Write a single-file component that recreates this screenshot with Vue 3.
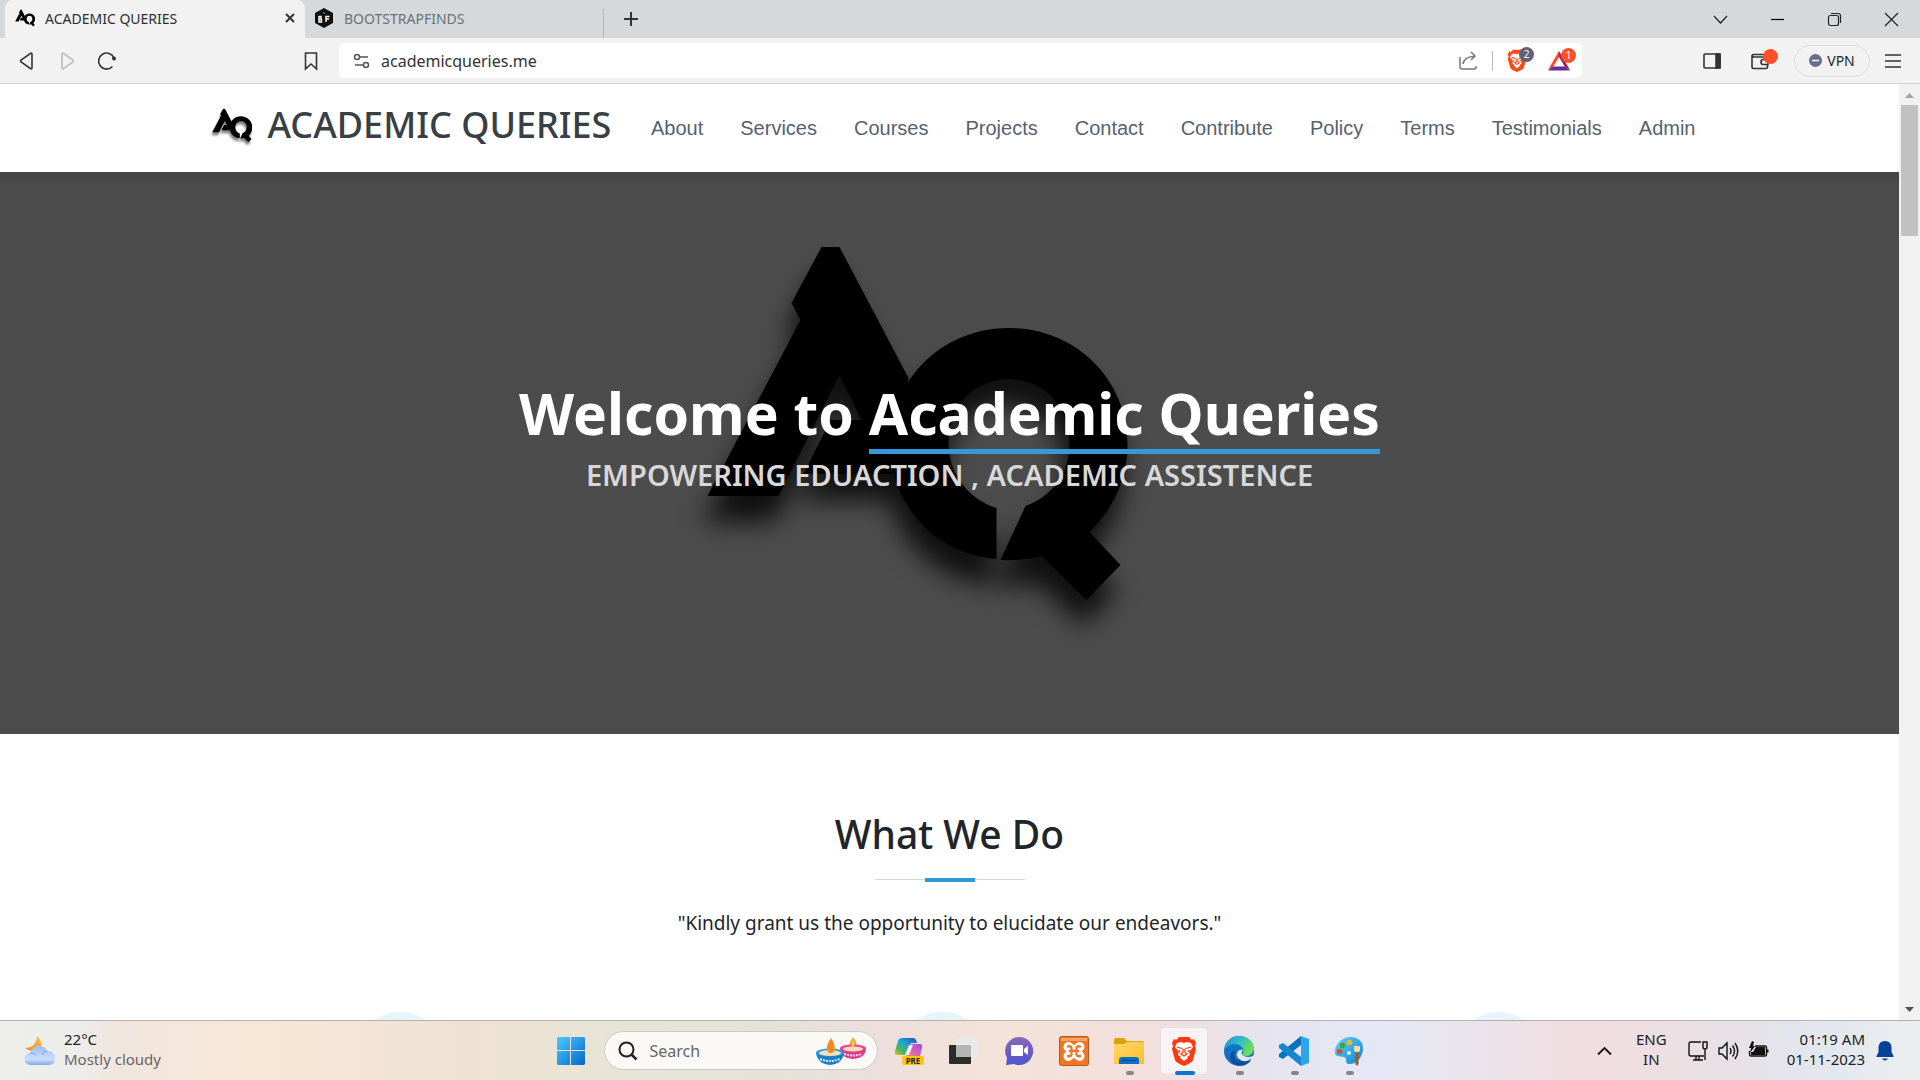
<script setup>
const navLinks = ['About', 'Services', 'Courses', 'Projects', 'Contact', 'Contribute', 'Policy', 'Terms', 'Testimonials', 'Admin']
const logoA = 'M821 247H839L908 378L900 474H803L830 420H861L839 375L778 496H707L800 320L791 303Z'
const logoQ = 'M1041 556Q1022 561 1000 560L1025 506C1052 496 1069 474 1069 443C1069 405 1042 379 1008.500 379C975 379 948 405 948 443C948 474 968 499 996 508V559C935 554 890 506 890 444C890 379 942 328 1008.500 328C1075 328 1127 379 1127 444C1127 478 1113 509 1089 532L1120 565L1086 600Z'
const lion = 'M8 1h10l3 3 2-1 2 4-1 3 1 3-3 11q0 2-9 6-9-4-9-6L1 13l1-3-1-3 2-4 2 1z'
const lionFace = 'M6 7l4-1 3 1 3-1 4 1 2 4-4 5 1 3-3 2 1 1-4 3-4-3 1-1-3-2 1-3-4-5z'
const lionLines = 'M6 11l5 1.500M20 11l-5 1.500M12 12.500v4l-2 1.500 3 2 3-2-2-1.500v-4M8 14l1 2M18 14l-1 2'
</script>

<template>
  <div class="screen">
    <header class="browser">
      <div class="tabs">
        <div class="tab active">
          <svg class="favicon" viewBox="704 244 420 360"><path :d="logoA" /><path :d="logoQ" /></svg>
          <span class="tab-title">ACADEMIC QUERIES</span>
          <button class="plain" aria-label="Close tab">
            <svg width="12" height="12" viewBox="0 0 12 12"><path d="M2 2l8 8M10 2l-8 8" stroke="#333" stroke-width="2" /></svg>
          </button>
        </div>
        <div class="tab idle">
          <svg class="favicon" viewBox="0 0 20 20"><path d="M10 0l9 5v10l-9 5-9-5V5z" fill="#111" /><path d="M5 8v6h2.500v-2.500H5M5 8.500h2v3M12 14V8.500h3.500M12 11h3" fill="none" stroke="#fff" stroke-width="1.400" /><path d="M9 4l2 2" stroke="#999" /></svg>
          <span class="tab-title">BOOTSTRAPFINDS</span>
        </div>
        <button class="plain new-tab" aria-label="New tab">
          <svg width="16" height="16" viewBox="0 0 16 16"><path d="M8 1v14M1 8h14" stroke="#333" stroke-width="2" /></svg>
        </button>
        <div class="window-buttons">
          <button class="plain" aria-label="Search tabs"><svg width="15" height="15" viewBox="0 0 15 15"><path d="M1 4l6.500 7L14 4" /></svg></button>
          <button class="plain" aria-label="Minimize"><svg width="15" height="15" viewBox="0 0 15 15"><path d="M1 7.500h13" stroke="#000" /></svg></button>
          <button class="plain" aria-label="Restore"><svg width="15" height="15" viewBox="0 0 15 15"><rect x="1.500" y="3.500" width="10" height="10" rx="2" /><path d="M4 1.500h7q2.500 0 2.500 2.500v7" /></svg></button>
          <button class="plain" aria-label="Close window"><svg width="15" height="15" viewBox="0 0 15 15"><path d="M1 1l13 13M14 1L1 14" /></svg></button>
        </div>
      </div>

      <div class="toolbar">
        <div class="history">
          <button class="plain" aria-label="Back"><svg width="20" height="20" viewBox="0 0 20 20"><path d="M15 3q0-1-1-1L4 9q-1 1 0 2l10 7q1 0 1-1z" /></svg></button>
          <button class="plain" aria-label="Forward"><svg class="dim" width="20" height="20" viewBox="0 0 20 20"><path d="M5 3q0-1 1-1l10 7q1 1 0 2L6 18q-1 0-1-1z" /></svg></button>
          <button class="plain" aria-label="Reload"><svg width="20" height="20" viewBox="0 0 20 20"><path d="M15.500 15.500A8 8 0 1 1 17 7" /><circle cx="17" cy="7.500" r="2" fill="#333" stroke="none" /></svg></button>
        </div>
        <button class="plain bookmark" aria-label="Bookmark"><svg width="20" height="20" viewBox="0 0 20 20"><path d="M4.500 2h11v16L10 13l-5.500 5z" /></svg></button>
        <div class="address">
          <svg class="site-info" width="18" height="18" viewBox="0 0 18 18"><circle cx="4" cy="5" r="2.500" /><path d="M6.500 5H15M2 13h8" /><circle cx="13" cy="13" r="2.500" /></svg>
          <input class="url" type="text" value="academicqueries.me" aria-label="Address" />
          <button class="plain" aria-label="Share"><svg class="share" width="20" height="20" viewBox="0 0 20 20"><path d="M2 6v10q0 2 2 2h12q2 0 2-2v-1M5 13q1-7 12-8M13 1l4 4-4 4" /></svg></button>
          <span class="rule"></span>
          <button class="plain shield" aria-label="Shields">
            <svg width="20" height="23" viewBox="0 0 26 30"><path :d="lion" fill="#fb4b16" /><path :d="lionFace" fill="#fff" /><path :d="lionLines" fill="none" stroke="#fb4b16" stroke-width="1.400" /></svg>
            <span class="badge">2</span>
          </button>
          <button class="plain rewards" aria-label="Rewards">
            <svg width="24" height="22" viewBox="0 0 24 22"><path d="M12 1L1 20l5-3 6-10z" fill="#ff4724" /><path d="M12 1l11 19-5-3-6-10z" fill="#9e1f63" /><path d="M1 20.500h22l-5-4H6z" fill="#662d91" /></svg>
            <span class="badge hot">1</span>
          </button>
        </div>
        <div class="tools">
          <button class="plain" aria-label="Sidebar"><svg width="18" height="18" viewBox="0 0 18 18"><rect x="1" y="2" width="16" height="14" rx="1" /><path d="M13 2h4v14h-4z" fill="#333" /></svg></button>
          <button class="plain wallet" aria-label="Wallet"><svg width="18" height="18" viewBox="0 0 18 18"><path d="M16.500 7V5H3Q1 4.500 1 3.500Q1.500 2.500 3 2.500H15M1 3.500V15q0 1.500 1.500 1.500H15q1.500 0 1.500-1.500v-2" /><path d="M17 7.500h-5q-2 0-2 2.500t2 2.500h5z" /></svg><span class="badge hot dot"></span></button>
          <button class="vpn"><svg width="13" height="13" viewBox="0 0 13 13"><circle cx="6.500" cy="6.500" r="6.500" fill="#676d91" /><path d="M3 6.500h7" stroke="#fff" stroke-width="1.500" /></svg>VPN</button>
          <button class="plain" aria-label="Menu"><svg width="18" height="16" viewBox="0 0 18 16"><path d="M1 2h16M1 8h16M1 14h16" /></svg></button>
        </div>
      </div>
    </header>

    <div class="viewport">
      <div class="page">
        <header class="site-header">
          <div class="container">
            <a class="brand" href="#">
              <svg class="brand-logo" viewBox="704 244 420 360"><path :d="logoA" /><path :d="logoQ" /></svg>
              <span>ACADEMIC QUERIES</span>
            </a>
            <nav class="site-nav">
              <a v-for="link in navLinks" :key="link" href="#">{{ link }}</a>
            </nav>
          </div>
        </header>

        <section class="hero">
          <svg class="hero-art" viewBox="649 172 600 562" aria-hidden="true">
            <g class="hero-mark"><path :d="logoA" /><path :d="logoQ" /></g>
          </svg>
          <h1>Welcome to <span>Academic Queries</span></h1>
          <h2>EMPOWERING EDUACTION , ACADEMIC ASSISTENCE</h2>
        </section>

        <section class="services">
          <h2>What We Do</h2>
          <div class="divider"></div>
          <p>"Kindly grant us the opportunity to elucidate our endeavors."</p>
          <div class="cards"><i></i><i></i><i></i></div>
        </section>
      </div>
      <div class="scrollbar" aria-hidden="true">
        <svg width="21" height="21" viewBox="0 0 21 21"><path d="M6 14h9l-4.500-5z" fill="#a3a3a3" /></svg>
        <div class="track"><div class="thumb"></div></div>
        <svg width="21" height="21" viewBox="0 0 21 21"><path d="M6 8h9l-4.500 5z" fill="#505050" /></svg>
      </div>
    </div>

    <footer class="taskbar">
      <div class="weather">
        <svg width="32" height="32" viewBox="0 0 32 32">
          <defs>
            <linearGradient id="moon" x1="0" y1="1" x2="1" y2="0"><stop offset="0" stop-color="#f08a1d" /><stop offset="1" stop-color="#f7c548" /></linearGradient>
            <linearGradient id="cloud" x1="0" y1="0" x2="0" y2="1"><stop offset="0" stop-color="#9dbdf5" /><stop offset=".7" stop-color="#cfdffb" /><stop offset="1" stop-color="#7ea4ec" /></linearGradient>
          </defs>
          <path d="M13 1q7 7 3 12-8 6-15 0Q12 13 13 1z" fill="url(#moon)" />
          <path d="M7 30a6 6 0 0 1-1-12Q9 11 15 11q6 0 8 5 8 0 8 7t-7 7z" fill="url(#cloud)" />
          <path d="M6 18q4 0 6 2M23 16q-4 0-5 4" fill="none" stroke="#7fa3e6" />
        </svg>
        <div class="lines"><div>22°C</div><div class="muted">Mostly cloudy</div></div>
      </div>

      <div class="apps">
        <button class="app" aria-label="Start">
          <svg width="30" height="30" viewBox="0 0 30 30"><defs><linearGradient id="win" x1="0" y1="0" x2="1" y2="1"><stop offset="0" stop-color="#4cc9fb" /><stop offset="1" stop-color="#0568d0" /></linearGradient></defs><path d="M2 1h12v13H1V2zM15 1h13l1 1v12H15zM1 15h13v14H2l-1-1zM15 15h14v13l-1 1H15z" fill="url(#win)" /></svg>
        </button>
        <div class="search">
          <svg width="20" height="20" viewBox="0 0 20 20"><circle cx="8.500" cy="8.500" r="7" fill="none" stroke="#222" stroke-width="2" /><path d="M13.500 13.500l5 5" stroke="#222" stroke-width="2.500" /></svg>
          <input type="text" placeholder="Search" aria-label="Search" />
          <svg width="52" height="28" viewBox="0 0 52 28">
            <path d="M38 0q6 8 2 11h-4q-4-3 2-11z" fill="#f6a23c" />
            <path d="M25 11h26q0 10-13 11-13-1-13-11z" fill="#d93b89" /><ellipse cx="38" cy="11" rx="13" ry="3.500" fill="#e9498f" /><ellipse cx="38" cy="12" rx="10" ry="2.500" fill="#f8d9b9" /><path d="M38 2q3 6 0 9-3-3 0-9z" fill="#fbc65a" />
            <path d="M29 17q9 3 18 0" fill="none" stroke="#ffd7ea" stroke-width="2" stroke-dasharray="2 1" />
            <path d="M1 15h28q-1 12-14 13Q2 27 1 15z" fill="#1c7fc4" /><ellipse cx="15" cy="15.500" rx="14" ry="4" fill="#2b9ad9" /><ellipse cx="15" cy="16" rx="11" ry="3" fill="#f6e2ba" />
            <path d="M16 1q7 11 1 15h-3q-5-5 2-15z" fill="#f48a1f" />
            <path d="M5 22q10 4 20 0" fill="none" stroke="#cfeaff" stroke-width="2" stroke-dasharray="2 1" />
          </svg>
        </div>
        <button class="app" aria-label="Copilot">
          <svg width="30" height="30" viewBox="0 0 30 30">
            <defs>
              <linearGradient id="cpa" x1="1" y1="0" x2="0" y2="1"><stop offset="0" stop-color="#1b4fc4" /><stop offset=".45" stop-color="#20a5d8" /><stop offset=".75" stop-color="#4fb84f" /><stop offset="1" stop-color="#f2c230" /></linearGradient>
              <linearGradient id="cpb" x1="1" y1="0" x2="0" y2="1"><stop offset="0" stop-color="#9a52e8" /><stop offset=".5" stop-color="#d65cc0" /><stop offset="1" stop-color="#f98a52" /></linearGradient>
            </defs>
            <path d="M8 2h11q3 0 4 5h-6l-4 12H3q-3 0-2-4L4 5q1-3 4-3z" fill="url(#cpa)" />
            <path d="M18 8h8q3 0 2 4l-2 8H12l4-10q0-2 2-2z" fill="url(#cpb)" />
            <path d="M15 9h4l-4 10h-4z" fill="#f5eef2" />
            <rect x="8" y="20" width="22" height="9" rx="2" fill="#fdc70d" />
            <text x="19" y="28" class="pre">PRE</text>
          </svg>
        </button>
        <button class="app" aria-label="Task view">
          <svg width="30" height="30" viewBox="0 0 30 30"><rect x="0" y="9" width="22" height="19" rx="1" fill="#2c2c2b" /><rect x="7" y="1" width="22" height="20" rx="1" fill="#e9e9e8" fill-opacity=".92" /><path d="M7 9h15v12H7z" fill="#b5b5b3" /></svg>
        </button>
        <button class="app" aria-label="Chat">
          <svg width="30" height="30" viewBox="0 0 30 30"><defs><linearGradient id="chat" x1="0" y1="0" x2="0" y2="1"><stop offset="0" stop-color="#8a66b8" /><stop offset="1" stop-color="#4f55cf" /></linearGradient></defs><path d="M15 1a14 14 0 1 1-5 27l-8 1 1-7A14 14 0 0 1 15 1z" fill="url(#chat)" /><rect x="7" y="9" width="12" height="11" rx="1" fill="#fff" /><path d="M20 13l4-3v9l-4-3z" fill="#fff" /></svg>
        </button>
        <button class="app" aria-label="XAMPP">
          <svg width="30" height="30" viewBox="0 0 30 30"><rect x=".5" y=".5" width="29" height="29" rx="2" fill="#ef7622" stroke="#b3571a" /><path d="M2 2h26v3H2z" fill="#f7a468" /><path d="M9.500 11L20.500 20M20.500 11L9.500 20" stroke="#fff" stroke-width="10" stroke-linecap="round" /><path d="M9 10.500q4-1 3.500 2.500M9 20q4 1 3.500-2.500M21 10.500q-4-1-3.500 2.500M21 20q-4 1-3.500-2.500M11 15h8" fill="none" stroke="#ef7622" stroke-width="2.400" stroke-linecap="round" /></svg>
        </button>
        <button class="app" aria-label="File Explorer">
          <svg width="30" height="30" viewBox="0 0 30 30"><defs><linearGradient id="folder" x1="0" y1="0" x2="1" y2="1"><stop offset="0" stop-color="#ffd968" /><stop offset="1" stop-color="#fbbd2b" /></linearGradient></defs><path d="M0 4q0-2 2-2h8l3 3h15q2 0 2 2v5H0z" fill="#dda00f" /><path d="M0 8h10l3-2h15q2 0 2 2v20H0z" fill="url(#folder)" /><path d="M5 28v-4q0-3 3-3h14q3 0 3 3v4z" fill="#0c6fc2" /><path d="M8 24.500h14" stroke="#0a4a8a" /></svg>
          <span class="running"></span>
        </button>
        <button class="app" aria-label="Brave">
          <span class="tile"><svg width="26" height="30" viewBox="0 0 26 30"><path :d="lion" fill="#fb3a12" /><path :d="lionFace" fill="#fff" /><path :d="lionLines" stroke="#fb3a12" stroke-width="1.300" fill="none" /></svg></span>
          <span class="running wide"></span>
        </button>
        <button class="app" aria-label="Edge">
          <svg width="30" height="30" viewBox="0 0 30 30">
            <defs><linearGradient id="edge" x1="0" y1="0" x2="1" y2=".5"><stop offset="0" stop-color="#1a8bd0" /><stop offset=".5" stop-color="#30bccb" /><stop offset="1" stop-color="#6fe052" /></linearGradient></defs>
            <circle cx="15" cy="15" r="15" fill="#1273c4" />
            <path d="M0 14C1 5 8 0 15 0c9 0 15 6 15 12 0 5-4 8-8 8-3 0-4-1-4-2 1-1 2-2 1-5C17 7 5 6 0 14z" fill="url(#edge)" />
            <path d="M11 14c-3 8 3 14 10 13l6-3C24 30 12 33 7 25q-3-7 4-11z" fill="#0d4f9c" />
            <path d="M29 20c1 1-1 4-3 5-8 3-15-3-13-8 1-3 4-4 6-3-2 2-2 5 1 6q4 2 9 0z" fill="#e4e6f2" />
            <path d="M27 22c-3 5-11 4-14-1 1 6 7 8 12 5q2-2 2-4z" fill="#0d4f9c" />
          </svg>
          <span class="running"></span>
        </button>
        <button class="app" aria-label="Visual Studio Code">
          <svg width="30" height="30" viewBox="0 0 30 30"><path d="M22 0l8 3v24l-8 3z" fill="#2ba5ee" /><path d="M22 0v9L4 23l-4-2v-3z" fill="#0b72b8" /><path d="M22 30v-9L4 7 0 9v3z" fill="#1587d0" /></svg>
          <span class="running"></span>
        </button>
        <button class="app" aria-label="Paint">
          <svg width="30" height="30" viewBox="0 0 30 30"><defs><linearGradient id="paint" x1="0" y1="0" x2="1" y2="1"><stop offset="0" stop-color="#5ed2f7" /><stop offset="1" stop-color="#1283cf" /></linearGradient></defs><path d="M16 1c8 0 13 4 13 11 0 8-5 16-14 16-5 0-1-6-5-7-5-1-9 0-9-5C1 8 8 1 16 1z" fill="url(#paint)" /><circle cx="15.500" cy="6.500" r="2.800" fill="#f6b51e" /><circle cx="8.500" cy="9.500" r="2.800" fill="#3da33c" /><circle cx="5.500" cy="15.500" r="2.800" fill="#d1552b" /><circle cx="15" cy="17" r="2" fill="#e6f5fd" /><path d="M20 10h6v4l-1 2h-4l-1-2z" fill="#f3dcae" /><path d="M21.500 16h3v12q-1.500 3-3 0z" fill="#9a5a2a" /></svg>
          <span class="running"></span>
        </button>
      </div>

      <div class="tray">
        <svg width="15" height="10" viewBox="0 0 15 10"><path d="M1 8.500l6.500-6.500L14 8.500" stroke-width="1.800" /></svg>
        <div class="lang lines">ENG<br />IN</div>
        <div class="status">
          <svg width="22" height="22" viewBox="0 0 22 22"><path d="M14 2H4Q2 2 2 4v10q0 2 2 2h13M6 20h10M9 16v4M12 16v4M16 2h4v5q0 2-2 2t-2-2zM18 9v11" /></svg>
          <svg width="22" height="22" viewBox="0 0 22 22"><path d="M2 8h3l5-5v16l-5-5H2zM13 8q2 3 0 6M15.500 5.500q4 5.500 0 11M18 3q5.500 8 0 16" /></svg>
          <svg width="22" height="22" viewBox="0 0 22 22"><path d="M8 6h10q1.500 0 1.500 1.500v7Q19.500 16 18 16H4q-1.500 0-1.500-1.500V11" /><path d="M9 7h9v8H4v-3h2z" fill="#111" stroke="none" /><path d="M20.500 9.500v3" stroke-width="2" /><path d="M5 1L2 8h2l-1 5 5-7H6l1-4z" fill="#111" stroke="none" /></svg>
        </div>
        <div class="clock lines">01:19 AM<br />01-11-2023</div>
        <svg width="18" height="20" viewBox="0 0 18 20"><path d="M9 0q6 0 6.500 6v5l2 4v1H.5v-1l2-4V6Q3 0 9 0z" fill="#06419a" stroke="none" /><path d="M6 17.500h6q-1 2-3 2t-3-2z" fill="#06419a" stroke="none" /></svg>
      </div>
    </footer>
  </div>
</template>

<style>
body { margin: 0; }
</style>

<style scoped>
* { box-sizing: border-box; }
.screen { height: 100vh; display: flex; flex-direction: column; overflow: hidden; background: #fff; font-family: "Noto Sans", "Open Sans", sans-serif; color: #212529; }
button, input { font: inherit; color: inherit; }
a { text-decoration: none; color: inherit; }
svg { flex: none; display: block; }
h1, h2, p { margin: 0; }
.plain { border: 0; background: none; padding: 0; display: flex; align-items: center; justify-content: center; position: relative; }

.tabs { display: flex; height: 38px; background: #d5d9dc; padding-left: 5px; }
.tab { display: flex; align-items: center; gap: 10px; padding: 0 9px 2px 10px; font-size: 14px; }
.tab.active { width: 300px; background: #f2f2f2; border-radius: 8px 8px 0 0; color: #2c2e33; }
.tab.idle { width: 299px; padding-left: 9px; color: #6d7175; position: relative; }
.tab.idle::after { content: ""; position: absolute; right: 0; top: 9px; bottom: 0; width: 1px; background: #b4b8bb; }
.tab-title { flex: 1; }
.favicon { width: 20px; height: 20px; }
.new-tab { width: 54px; }
.window-buttons { margin-left: auto; display: flex; }
.window-buttons button { width: 57px; }
.window-buttons svg { fill: none; stroke: #222; stroke-width: 1.2; }

.toolbar { display: flex; align-items: center; height: 46px; background: #f2f2f2; border-bottom: 1px solid #d0d1d3; }
.history { display: flex; gap: 20px; padding-left: 17px; width: 299px; }
.history svg, .bookmark svg, .tools svg { fill: none; stroke: #333; stroke-width: 1.6; }
.history svg.dim { stroke: #bbb; }
.bookmark { width: 24px; margin-right: 16px; }
.address { flex: 1; display: flex; align-items: center; height: 35px; background: #fff; border-radius: 6px; padding: 0 11px 0 14px; max-width: 1243px; }
.site-info { fill: none; stroke: #555; stroke-width: 1.5; }
.url { flex: 1; border: 0; background: none; padding: 0; margin-left: 10px; font-size: 16px; outline: 0; color: #333; }
.share { fill: none; stroke: #777; stroke-width: 1.5; }
.rule { width: 1px; height: 20px; background: #bbb; margin: 0 14px; }
.shield { width: 20px; margin-right: 20px; }
.rewards { width: 24px; }
.badge { position: absolute; left: 12px; top: -2px; width: 15px; height: 15px; border-radius: 8px; background: #5f6374; color: #fff; font-size: 10px; line-height: 15px; text-align: center; }
.rewards .badge { left: 14px; }
.badge.hot { background: #ff5029; }
.badge.dot { left: 12px; top: -3px; }
.tools { margin-left: auto; display: flex; align-items: center; padding-right: 18px; }
.wallet { margin: 0 25px 0 30px; }
.vpn { width: 76px; height: 32px; margin-right: 14px; border: 1px solid #ddd; border-radius: 16px; background: none; display: flex; align-items: center; justify-content: center; gap: 5px; font-size: 14px; padding: 0; }
.vpn svg { stroke: none; }

.viewport { flex: 1; display: flex; min-height: 0; }
.page { flex: 1; overflow: hidden; }
.site-header { background: #fff; }
.container { max-width: 1498px; height: 88px; margin: 0 auto; padding: 0 3px 0 11px; display: flex; align-items: center; justify-content: space-between; }
.brand { display: flex; align-items: center; gap: 16px; font-size: 36px; line-height: 40px; font-weight: 500; color: #384046; padding-bottom: 6px; }
.brand-logo { width: 40px; height: 35px; filter: drop-shadow(-1px 3px 1px rgba(0, 0, 0, .5)); }
.site-nav { display: flex; gap: 37px; font: 20px/24px "Liberation Sans", Arial, sans-serif; color: #556270; }

.hero { position: relative; min-height: 562px; background: linear-gradient(#464646, #4c4c4c 18px); display: flex; flex-direction: column; align-items: center; justify-content: center; padding-bottom: 34px; }
.hero-art { position: absolute; inset: 0; width: 100%; height: 100%; }
.hero-mark { filter: drop-shadow(-4px 26px 13px rgba(0, 0, 0, .8)); }
.hero h1 { position: relative; font-size: 57px; line-height: 72px; font-weight: 700; color: #fff; }
.hero h1 span { display: inline-block; border-bottom: 5px solid #3498db; }
.hero h2 { position: relative; font-size: 29px; line-height: 42px; font-weight: 600; color: #d8d8d8; }

.services { padding-top: 76px; display: flex; flex-direction: column; align-items: center; }
.services h2 { font-size: 39px; line-height: 48px; font-weight: 500; }
.divider { width: 150px; height: 4px; margin-top: 20px; background: linear-gradient(#3498db, #3498db) center / 50px 4px no-repeat, linear-gradient(#d5d5d5, #d5d5d5) 0 1px / 100% 1px no-repeat; }
.services p { font-size: 19px; line-height: 30px; margin-top: 26px; }
.cards { display: grid; grid-template-columns: 542fr 557fr 90px; width: 100%; max-width: 1189px; margin-top: 74px; }
.cards i { width: 90px; height: 90px; border-radius: 50%; background: #e8f4fb; }

.scrollbar { width: 21px; background: #f1f1f1; display: flex; flex-direction: column; }
.track { flex: 1; padding: 0 2px; }
.thumb { height: 131px; background: #c1c1c1; }

.taskbar { height: 60px; display: grid; grid-template-columns: 1fr auto 1fr; align-items: center; border-top: 1px solid #b3b1b1; color: #222; font-size: 15px; line-height: 20px; background: linear-gradient(90deg, #eeefec 0, #ededeb 4%, #f0e6de 6%, #f8e7d7 13%, #efe2d4 24%, #e6e5d6 33%, #e6e2d9 40%, #ecdfdd 46%, #f4e3d8 52%, #f3dfde 60%, #e6e4ef 66%, #e5e9f5 72%, #f1dddf 83%, #e7e1e5 90%, #e2e7f0 95%, #ecefef 100%); }
.lines { padding-bottom: 3px; }
.weather { display: flex; align-items: center; gap: 8px; padding-left: 24px; }
.muted { color: #666; }
.apps { display: flex; align-items: center; }
.app { width: 55px; height: 58px; border: 0; background: none; padding: 0; position: relative; display: flex; align-items: center; justify-content: center; }
.search { display: flex; align-items: center; width: 274px; height: 39px; margin: 0 4px 0 5px; padding: 0 10px 0 13px; border-radius: 20px; border: 1px solid #ccc9c4; background: #faf9f6; }
.search input { flex: 1; min-width: 0; border: 0; background: none; padding: 0 0 0 12px; outline: 0; font-size: 16px; }
.search input::placeholder { color: #666; opacity: 1; }
.pre { font: 700 8px "Noto Sans", sans-serif; text-anchor: middle; fill: #222; }
.tile { width: 48px; height: 48px; border: 1px solid #e6dfe0; border-radius: 5px; background: #faf3f3; display: flex; align-items: center; justify-content: center; }
.running { position: absolute; bottom: 5px; left: 24px; width: 8px; height: 4px; border-radius: 2px; background: #85858a; }
.running.wide { left: 18px; width: 20px; background: #0a74d6; }
.tray { display: flex; align-items: center; justify-content: flex-end; padding-right: 26px; }
.tray svg { fill: none; stroke: #111; stroke-width: 1.4; }
.lang { text-align: center; margin: 0 20px 0 24px; }
.status { display: flex; gap: 8px; margin-right: 18px; }
.clock { text-align: right; margin-right: 11px; }
</style>
